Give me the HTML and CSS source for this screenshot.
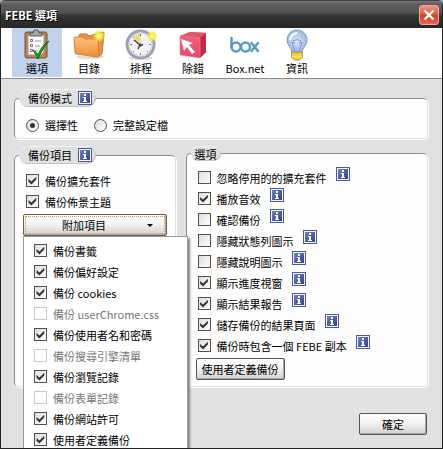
FILE: index.html
```html
<!DOCTYPE html>
<html lang="zh-Hant">
<head>
<meta charset="utf-8">
<meta name="viewport" content="width=device-width, initial-scale=1">
<title>FEBE 選項</title>
<link rel="stylesheet" href="styles.css">
</head>
<body>
<svg class="defs" width="0" height="0" aria-hidden="true">
  <defs>
    <linearGradient id="blue" x1="0" y1="0" x2="1" y2="1"><stop offset="0" stop-color="#7084bc"/><stop offset="1" stop-color="#2f4187"/></linearGradient>
    <linearGradient id="orange" x1="0" y1="0" x2="0" y2="1"><stop offset="0" stop-color="#ffc37c"/><stop offset="1" stop-color="#ee8d37"/></linearGradient>
    <linearGradient id="red" x1="0" y1="0" x2="0" y2="1"><stop offset="0" stop-color="#f0607c"/><stop offset="1" stop-color="#e04a68"/></linearGradient>
    <radialGradient id="glow"><stop offset="0" stop-color="#fffbb0"/><stop offset=".45" stop-color="#f7e840"/><stop offset="1" stop-color="#f7e840" stop-opacity="0"/></radialGradient>
    <radialGradient id="glass"><stop offset="0" stop-color="#dce9f8"/><stop offset="1" stop-color="#9db9df"/></radialGradient>
    <symbol id="info" viewBox="0 0 14 14">
      <path fill="#465a9c" d="M0 0h14v14H0z"/><path fill="#f4f6fb" d="M1 1h12v12H1z"/><path fill="url(#blue)" d="M2 2h10v10H2z"/>
      <path fill="#fff" d="M6 3h2v2H6zM5 6h3v4h1v1H5v-1h1V7H5z"/>
    </symbol>
  </defs>
</svg>
<div class="window">
  <header class="titlebar">
    <h1>FEBE 選項</h1>
    <button class="close" type="button" aria-label="關閉"><svg width="12" height="12" viewBox="0 0 12 12"><path d="M1.500 1.500l9 9M10.500 1.500l-9 9" stroke="#fff" stroke-width="2.400"/></svg></button>
  </header>
  <nav class="toolbar">
    <button class="tool selected" type="button">
      <svg width="32" height="32" viewBox="0 0 32 32">
        <rect x="4" y="3" width="22" height="26" rx="2" fill="#b98448" stroke="#7b5125"/>
        <path d="M7 6h16v17l-3 3H7z" fill="#fafafa" stroke="#9a9a9a"/>
        <path d="M9 7V4h3l1-3h4l1 3h3v3z" fill="#a5a5a8" stroke="#5c5c60"/>
        <path d="M9.500 10.500h2v2h-2zM9.500 15.500h2v2h-2zM9.500 20.500h2v2h-2z" fill="#fff" stroke="#777"/>
        <path d="M14 12h6M14 17h5M14 22h3" stroke="#999"/>
        <path d="M12 21c2 1 4 3 5 5 3-7 6-11 11-14-5 6-8 11-11 18-2-4-3-6-5-9z" fill="#1ba31f" stroke="#087411"/>
      </svg><span>選項</span>
    </button>
    <button class="tool" type="button">
      <svg width="32" height="32" viewBox="0 0 32 32">
        <ellipse cx="17" cy="28" rx="14" ry="2" fill="#ddd"/>
        <path d="M6 9V6q0-1 2-1h6l2 2 13-4q3 0 2 2l-2 20-4 3z" fill="#e79446" stroke="#c37426"/>
        <path d="M1 9q0-1 2-1h7l2 2h11q2 0 2 2l1 14q0 2-2 2L4 25q-2 0-2-2z" fill="url(#orange)" stroke="#d28236"/>
        <circle cx="26" cy="7" r="6.500" fill="url(#glow)"/>
      </svg><span>目錄</span>
    </button>
    <button class="tool" type="button">
      <svg width="32" height="32" viewBox="0 0 32 32">
        <ellipse cx="16" cy="29" rx="12" ry="2" fill="#ddd"/>
        <circle cx="15.500" cy="15.500" r="13.500" fill="#f3f3f5" stroke="#9da1b5" stroke-width="3"/>
        <circle cx="15.500" cy="15.500" r="11.500" fill="none" stroke="#d3d5dd"/>
        <path d="M15.500 15.500L8 8q3-3 7.500-3.500z" fill="#e9d983"/>
        <path d="M15.500 5v2M15.500 24v2M5 15.500h2M24 15.500h2M8 23l1-1M23 23l-1-1M8 8l1 1" stroke="#777"/>
        <path d="M9 11l6 5-2 4M15 16h3" fill="none" stroke="#444" stroke-width="1.500"/>
        <circle cx="15.500" cy="16" r="1.600" fill="#444"/>
        <circle cx="27" cy="7" r="6" fill="url(#glow)"/>
      </svg><span>排程</span>
    </button>
    <button class="tool" type="button">
      <svg width="32" height="32" viewBox="0 0 32 32">
        <path d="M3 7l10-4 16 1v19l-5 5z" fill="#c92645"/>
        <path d="M3 7l10-4 16 1-6 5z" fill="#e4566f"/>
        <path d="M23 9l6-5v19l-6 6z" fill="#c42b49"/>
        <path d="M3 7l20 2v20L3 26z" fill="url(#red)" stroke="#ef8296" stroke-width=".6"/>
        <path d="M4 10l12 4-4 2 6 7-3 2-5-7-3 4z" fill="#fff"/>
      </svg><span>除錯</span>
    </button>
    <button class="tool" type="button">
      <svg width="32" height="32" viewBox="0 0 32 32">
        <g fill="none" stroke="#5799c5" stroke-width="2.500" stroke-linecap="round"><path d="M2.500 9v9"/><circle cx="7" cy="18" r="4.500"/><circle cx="16.500" cy="18" r="4.500"/><path d="M22.500 14l6.500 8M29 14l-6.500 8"/></g>
      </svg><span>Box.net</span>
    </button>
    <button class="tool" type="button">
      <svg width="32" height="32" viewBox="0 0 32 32">
        <path d="M16 1C9.500 1 6 6 6 11c0 5 4 7 5 12h10c1-5 5-7 5-12C26 6 22.500 1 16 1z" fill="url(#glass)" stroke="#8199c4"/>
        <path d="M9 11q1-6 7-7" fill="none" stroke="#fff" stroke-width="2"/>
        <path d="M14 23l-3-10 3 1M18 23l3-10-3 1M12 12q4-3 8 0" fill="none" stroke="#8397c2"/>
        <path d="M10.500 23q5.500 2 11 0v5l-3 3h-5l-3-3z" fill="#f0d43a" stroke="#b69629"/>
        <path d="M11 27q5 2 10 0" fill="none" stroke="#fff29a"/>
      </svg><span>資訊</span>
    </button>
  </nav>
  <main class="content">
    <fieldset class="group mode">
      <legend class="with-info">備份模式 <svg class="info" role="img" aria-label="說明"><use href="#info"/></svg></legend>
      <div class="radios">
        <label><input type="radio" name="mode" checked>選擇性</label>
        <label><input type="radio" name="mode">完整設定檔</label>
      </div>
    </fieldset>
    <div class="columns">
      <fieldset class="group items">
        <legend class="with-info">備份項目 <svg class="info" role="img" aria-label="說明"><use href="#info"/></svg></legend>
        <div class="rows">
          <div class="row"><label><input type="checkbox" checked>備份擴充套件</label></div>
          <div class="row"><label><input type="checkbox" checked>備份佈景主題</label></div>
        </div>
        <div class="dropdown">
          <button class="btn menu-button" type="button" aria-expanded="true"><span>附加項目</span><i class="arrow"></i></button>
          <div class="menu">
            <label><input type="checkbox" checked>備份書籤</label>
            <label><input type="checkbox" checked>備份偏好設定</label>
            <label><input type="checkbox" checked>備份 cookies</label>
            <label><input type="checkbox" disabled>備份 userChrome.css</label>
            <label><input type="checkbox" checked>備份使用者名和密碼</label>
            <label><input type="checkbox" disabled>備份搜尋引擎清單</label>
            <label><input type="checkbox" checked>備份瀏覽記錄</label>
            <label><input type="checkbox" disabled>備份表單記錄</label>
            <label><input type="checkbox" checked>備份網站許可</label>
            <label><input type="checkbox" checked>使用者定義備份</label>
          </div>
        </div>
      </fieldset>
      <fieldset class="group options">
        <legend>選項</legend>
        <div class="rows">
          <div class="row"><label><input type="checkbox">忽略停用的的擴充套件</label><svg class="info" role="img" aria-label="說明"><use href="#info"/></svg></div>
          <div class="row"><label><input type="checkbox" checked>播放音效</label><svg class="info" role="img" aria-label="說明"><use href="#info"/></svg></div>
          <div class="row"><label><input type="checkbox">確認備份</label><svg class="info" role="img" aria-label="說明"><use href="#info"/></svg></div>
          <div class="row"><label><input type="checkbox">隱藏狀態列圖示</label><svg class="info" role="img" aria-label="說明"><use href="#info"/></svg></div>
          <div class="row"><label><input type="checkbox">隱藏說明圖示</label><svg class="info" role="img" aria-label="說明"><use href="#info"/></svg></div>
          <div class="row"><label><input type="checkbox" checked>顯示進度視窗</label><svg class="info" role="img" aria-label="說明"><use href="#info"/></svg></div>
          <div class="row"><label><input type="checkbox" checked>顯示結果報告</label><svg class="info" role="img" aria-label="說明"><use href="#info"/></svg></div>
          <div class="row"><label><input type="checkbox" checked>儲存備份的結果頁面</label><svg class="info" role="img" aria-label="說明"><use href="#info"/></svg></div>
          <div class="row"><label><input type="checkbox" checked>備份時包含一個 FEBE 副本</label><svg class="info" role="img" aria-label="說明"><use href="#info"/></svg></div>
        </div>
        <button class="btn custom" type="button">使用者定義備份</button>
      </fieldset>
    </div>
    <footer class="actions"><button class="btn ok" type="button">確定</button></footer>
  </main>
</div>
</body>
</html>
```

FILE: styles.css
```css
* { box-sizing: border-box; }

body {
  margin: 0;
  overflow: hidden;
  background: #a9b3b8;
  color: #000;
  font: 11px/14px "Noto Sans CJK TC", sans-serif;
}

button, input { margin: 0; font: inherit; color: inherit; }
.defs { position: absolute; }

.window {
  display: flex;
  flex-direction: column;
  min-height: 100vh;
  border: solid #222;
  border-width: 0 1px 1px;
  border-radius: 5px 5px 0 0;
  background: #e1e1e1;
  overflow: hidden;
}

.titlebar {
  display: flex;
  align-items: center;
  justify-content: space-between;
  height: 28px;
  padding: 0 3px 0 4px;
  border-top: 1px solid #444;
  background: linear-gradient(#777 0, #5f5f5f 3px, #505050 45%, #363636 52%, #262626);
}
.titlebar h1 {
  margin: 0;
  font-size: 11px;
  font-weight: 700;
  color: #fff;
  text-shadow: 1px 1px 0 #000;
}
.close {
  display: grid;
  place-items: center;
  width: 20px;
  height: 20px;
  padding: 0;
  border: 1px solid #f0a898;
  border-radius: 3px;
  background: linear-gradient(#ee9380, #d9553d 50%, #cf4126 50%, #e0694d);
}

.toolbar {
  display: flex;
  gap: 2px;
  padding: 0 11px 1px;
  border-bottom: 1px solid #8a8a8a;
  background: #fff;
}
.tool {
  display: flex;
  flex-direction: column;
  align-items: center;
  width: 50px;
  height: 49px;
  padding: 1px 0 0;
  border: 0;
  background: none;
}
.tool span { line-height: 14px; }
.tool.selected { background: #c1d2ee; }

.content {
  display: flex;
  flex: 1;
  flex-direction: column;
  gap: 7px;
  padding: 10px 14px 13px 13px;
}

.group {
  min-width: 0;
  margin: 0;
  padding: 0 4px;
  border: 1px solid;
  border-color: #8c8c8c #e1e1e1 #e1e1e1 #8c8c8c;
  border-radius: 5px;
  background: #fdfdfd;
  box-shadow: 1px 1px 0 #fff;
}
legend {
  display: flex;
  align-items: center;
  gap: 6px;
  height: 15px;
  padding: 0 4px;
  border-radius: 9px;
  background: #e1e1e1;
  box-shadow: inset -1px -1px 0 #c4c4c4, inset 0 1px 0 #f2f2f2;
}
legend.with-info { height: 18px; padding: 0 4px 0 9px; }
.info { flex: none; width: 14px; height: 14px; }

label { display: flex; align-items: center; gap: 6px; white-space: nowrap; }
.radios { display: flex; gap: 16px; padding: 11px 7px 6px; }

input[type="checkbox"], input[type="radio"] {
  appearance: none;
  display: grid;
  place-items: center;
  flex: none;
  width: 13px;
  height: 13px;
  border: 1px solid #505050;
  background: linear-gradient(135deg, #ddd, #fff);
}
input[type="radio"] { border-radius: 50%; }
input[type="radio"]:checked::before {
  content: "";
  width: 5px;
  height: 5px;
  border-radius: 50%;
  background: #333;
}
input[type="checkbox"]:checked::before {
  content: "";
  width: 9px;
  height: 9px;
  background: #333;
  clip-path: polygon(6% 34%, 38% 62%, 92% 8%, 92% 38%, 38% 94%, 6% 64%);
}
input[type="checkbox"]:disabled { border-color: #c9c9c9; background: #fff; }
label:has(:disabled) { color: #777; }

.columns {
  display: grid;
  grid-template-columns: 2fr 3fr;
  gap: 10px;
}
.rows { padding: 6px 7px 2px; }
.row { display: flex; align-items: center; gap: 9px; height: 21px; }
.row .info { align-self: flex-start; }

.btn {
  display: flex;
  align-items: center;
  justify-content: center;
  height: 22px;
  padding: 0 5px;
  border: 1px solid #555;
  border-radius: 2px;
  background: linear-gradient(#fff, #f3f3f3 45%, #d0d0d0);
  box-shadow: inset -1px -1px 0 #aaa;
  white-space: nowrap;
}
.dropdown { position: relative; padding: 0 4px; }
.menu-button {
  width: 100%;
  padding: 0 13px 0 38px;
  border-color: #6b5f50;
  outline: 1px dotted #d99a3c;
  outline-offset: -3px;
  justify-content: space-between;
}
.arrow {
  border: solid transparent;
  border-width: 3px 3px 0;
  border-top-color: #000;
}
.menu {
  position: absolute;
  top: 100%;
  left: 4px;
  padding: 3px 28px 3px 10px;
  border: 1px solid #999;
  background: #fff;
  box-shadow: 2px 2px 2px #888;
}
.menu label { height: 21px; }

.options .custom { margin: 0 5px 6px; }

.actions { display: flex; justify-content: flex-end; margin-top: auto; padding: 0 1px; }
.ok { width: 68px; }
```
